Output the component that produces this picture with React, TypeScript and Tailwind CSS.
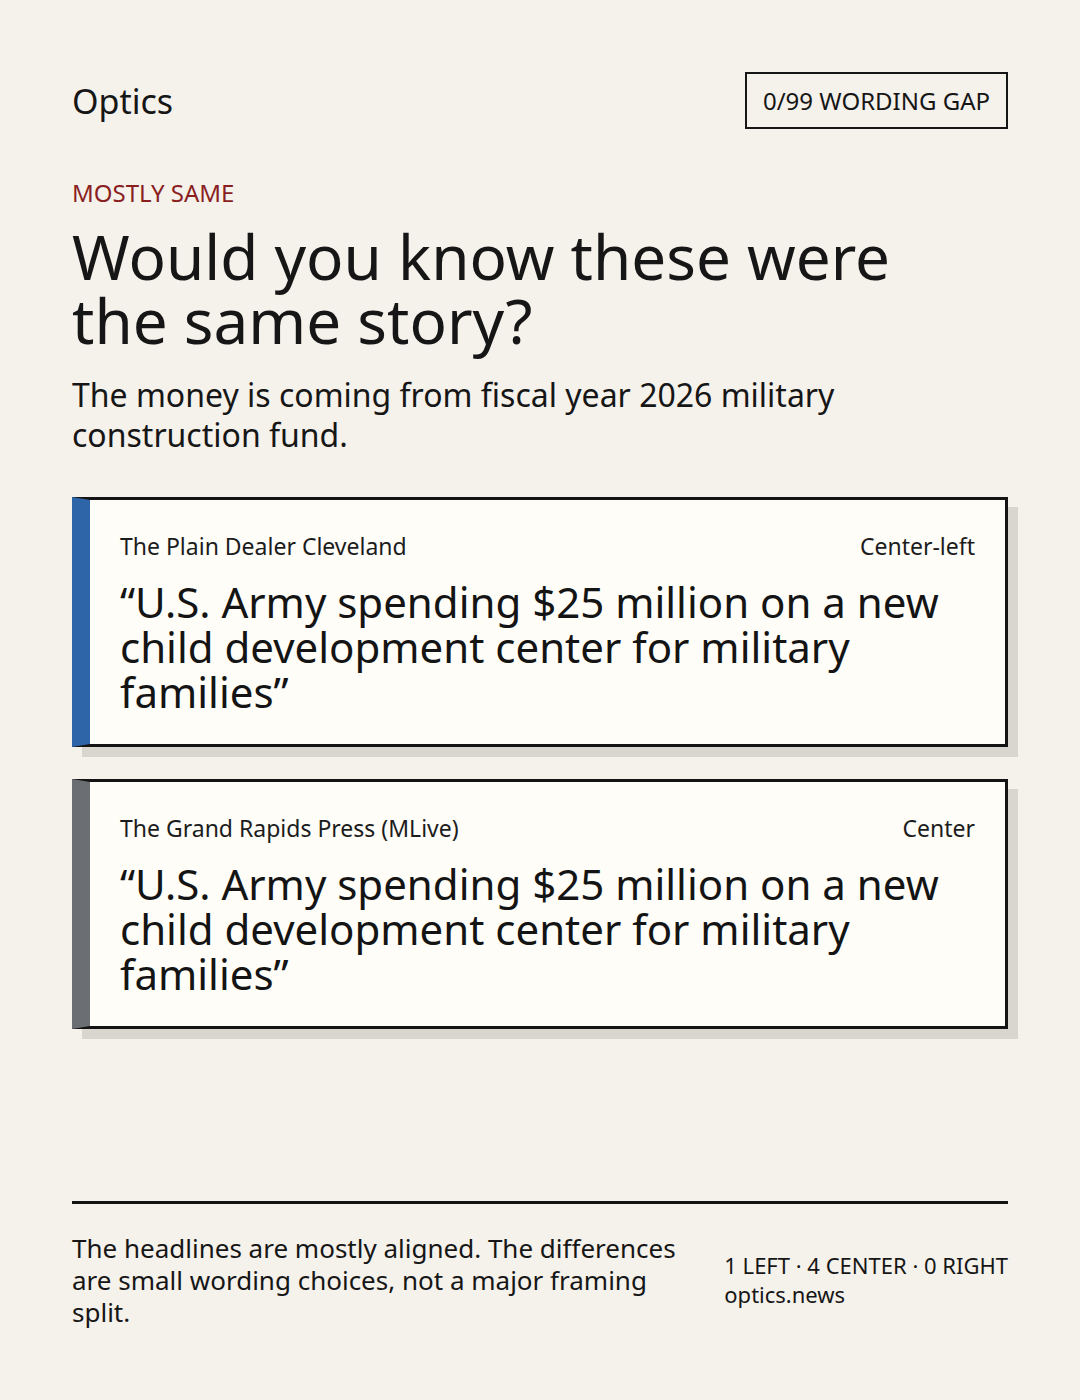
import React from "react";

type Headline = {
  outlet: string;
  lean: string;
  title: string;
  barColor: string;
};

const headlines: Headline[] = [
  {
    outlet: "The Plain Dealer Cleveland",
    lean: "Center-left",
    title: "“U.S. Army spending $25 million on a new child development center for military families”",
    barColor: "border-l-[#2e64a8]",
  },
  {
    outlet: "The Grand Rapids Press (MLive)",
    lean: "Center",
    title: "“U.S. Army spending $25 million on a new child development center for military families”",
    barColor: "border-l-[#6b6e72]",
  },
];

const HeadlineCard = ({ item }: { item: Headline }) => {
  return (
    <div
      className={`border-[3px] border-[#141414] border-l-[18px] ${item.barColor} bg-[#fefdf8] px-[30px] pt-[31px] pb-[30px] shadow-[10px_10px_0_0_#d9d6cf]`}
    >
      <div className="flex flex-row items-center justify-between text-[23px] leading-[30px] text-[#1c1c1c]">
        <span>{item.outlet}</span>
        <span>{item.lean}</span>
      </div>
      <div className="mt-[18px] text-[42px] leading-[45px] text-[#141414]">
        {item.title}
      </div>
    </div>
  );
};

export default function App() {
  return (
    <div
      className="flex min-h-screen flex-col bg-[#f5f1eb] px-[72px] pt-[72px] pb-[72px] text-[#161616]"
      style={{ fontFamily: '"Noto Sans", "Open Sans", sans-serif' }}
    >
      <div className="flex flex-row items-center justify-between">
        <span className="text-[34px] leading-[40px]">Optics</span>
        <div className="border-2 border-[#161616] px-[16px] py-[12px] text-[24px] leading-[29px]">
          0/99 WORDING GAP
        </div>
      </div>

      <div className="mt-[49px] text-[24px] leading-[30px] text-[#8a1f1f]">
        MOSTLY SAME
      </div>
      <h1 className="mt-[16px] text-[62px] leading-[64px]">
        Would you know these were
        <br />
        the same story?
      </h1>
      <p className="mt-[23px] max-w-[800px] text-[32px] leading-[40px]">
        The money is coming from fiscal year 2026 military construction fund.
      </p>

      <div className="mt-[42px] flex flex-col gap-[32px]">
        {headlines.map((h) => (
          <HeadlineCard key={h.outlet} item={h} />
        ))}
      </div>

      <div className="flex-1" />

      <div className="border-t-[3px] border-[#141414] pt-[28px]">
        <div className="flex flex-row items-center justify-between gap-[48px]">
          <p className="max-w-[620px] flex-1 text-[26px] leading-[32px]">
            The headlines are mostly aligned. The differences are small wording
            choices, not a major framing split.
          </p>
          <div className="shrink-0 whitespace-nowrap text-[22px] leading-[29px]">
            <div>1 LEFT · 4 CENTER · 0 RIGHT</div>
            <div>optics.news</div>
          </div>
        </div>
      </div>
    </div>
  );
}
